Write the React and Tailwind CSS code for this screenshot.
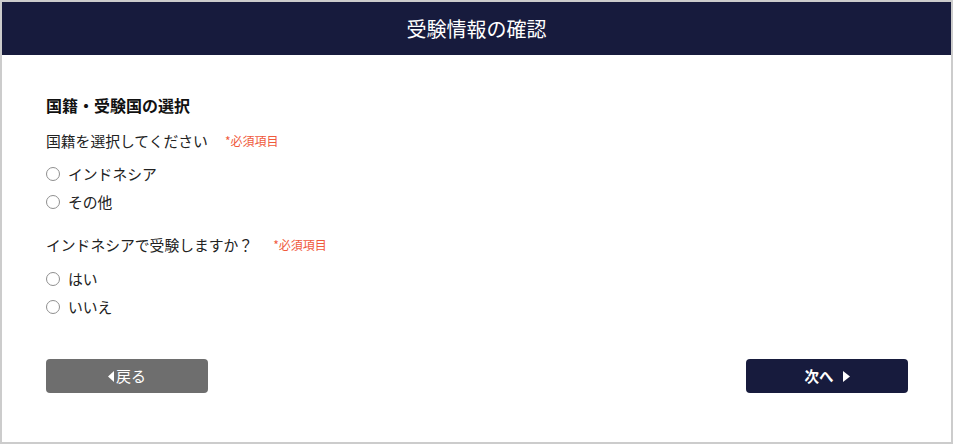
export default function App() {
  const font = { fontFamily: '"Noto Sans CJK JP", "Noto Sans", sans-serif' };

  const Radio = ({ name, label }) => (
    <label className="flex items-center h-[22px] text-[14.8px] text-[#222] leading-[22px]">
      <input
        type="radio"
        name={name}
        className="m-0 w-[14px] h-[14px] appearance-none rounded-full border border-[#8f8f8f] bg-white checked:border-[4px] checked:border-[#171b3d]"
      />
      <span className="ml-[8px]">{label}</span>
    </label>
  );

  return (
    <div style={font} className="h-[444px] w-full border-2 border-[#cccccc] bg-white">
      {/* header */}
      <div className="h-[53px] bg-[#171b3d] flex items-center justify-center">
        <h1 className="text-[20px] text-white leading-none">受験情報の確認</h1>
      </div>

      <div className="pl-[44px] pr-[43px]">
        <h2 className="mt-[38px] text-[16px] font-bold leading-[24px] text-[#111]">
          国籍・受験国の選択
        </h2>

        <p className="mt-[13px] flex items-center text-[14.8px] leading-[22px] text-[#222]">
          国籍を選択してください
          <span className="ml-[17px] text-[12px] text-[#f05a3c]">*必須項目</span>
        </p>
        <div className="mt-[11px] flex flex-col gap-[6px]">
          <Radio name="nationality" label="インドネシア" />
          <Radio name="nationality" label="その他" />
        </div>

        <p className="mt-[21px] flex items-center text-[14.8px] leading-[22px] text-[#222]">
          インドネシアで受験しますか？
          <span className="ml-[20px] text-[12px] text-[#f05a3c]">*必須項目</span>
        </p>
        <div className="mt-[12px] flex flex-col gap-[6px]">
          <Radio name="country" label="はい" />
          <Radio name="country" label="いいえ" />
        </div>

        {/* buttons */}
        <div className="mt-[41px] flex justify-between">
          <button className="w-[162px] h-[34px] rounded-[4px] bg-[#6e6e6e] text-white text-[15px] flex items-center justify-center">
            <svg width="6" height="11" viewBox="0 0 6 11" className="mr-[2px]">
              <polygon points="6,0 6,11 0,5.5" fill="white" />
            </svg>
            戻る
          </button>
          <button className="w-[162px] h-[34px] rounded-[4px] bg-[#171b3d] text-white text-[14.5px] font-bold flex items-center justify-center">
            次へ
            <svg width="7" height="11" viewBox="0 0 7 11" className="ml-[9px]">
              <polygon points="0,0 7,5.5 0,11" fill="white" />
            </svg>
          </button>
        </div>
      </div>
    </div>
  );
}
